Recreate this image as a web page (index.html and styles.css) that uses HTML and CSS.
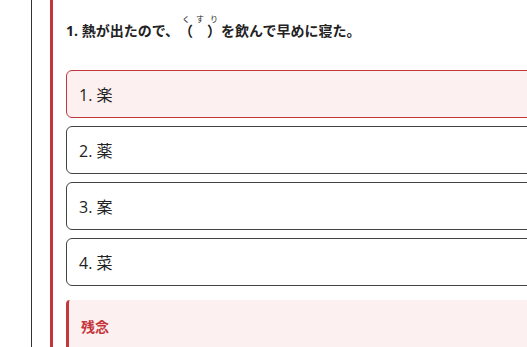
FILE: index.html
```html
<!DOCTYPE html>
<html lang="ja">
<head>
    <meta charset="UTF-8">
    <meta name="viewport" content="width=device-width, initial-scale=1.0">
    <title>漢字クイズ</title>
    <link rel="stylesheet" href="styles.css">
</head>
<body>
    <div class="page">
        <div class="question">
            <p class="question-title">1. 熱が出たので、<ruby>（　）<rt>くすり</rt></ruby>を飲んで早めに寝た。</p>

            <div class="options">
                <div class="option wrong">1. 楽</div>
                <div class="option">2. 薬</div>
                <div class="option">3. 案</div>
                <div class="option">4. 菜</div>
            </div>

            <div class="feedback">
                <span class="feedback-title">残念</span>
            </div>
        </div>
    </div>
</body>
</html>
```

FILE: styles.css
```css
* {
    margin: 0;
    padding: 0;
    box-sizing: border-box;
}

html, body {
    overflow: hidden;
}

body {
    font-family: "Open Sans", "Noto Sans CJK JP", sans-serif;
    background-color: white;
    color: #222;
}

.page {
    margin-left: 31px;
    border-left: 1px solid #333;
    padding-left: 18px;
    min-height: 100vh;
    width: 640px;
}

.question {
    border-left: 3px solid #c4363c;
    padding-left: 13px;
    padding-top: 14px;
    min-height: 100vh;
}

.question-title {
    font-size: 14px;
    font-weight: bold;
    line-height: 28px;
    height: 28px;
    color: #222;
}

.question-title rt {
    font-size: 8px;
    font-weight: normal;
    line-height: 1;
}

.options {
    display: flex;
    flex-direction: column;
    gap: 8px;
    margin-top: 28px;
}

.option {
    height: 48px;
    display: flex;
    align-items: center;
    padding-left: 12px;
    font-size: 16px;
    color: #222;
    border: 1px solid #444;
    border-radius: 6px;
    background-color: white;
}

.option.wrong {
    background-color: #fdf0f0;
    border-color: #c4363c;
}

.feedback {
    margin-top: 14px;
    background-color: #fdf0f0;
    border-left: 3px solid #c4363c;
    border-radius: 4px 0 0 4px;
    padding: 15px 12px;
    height: 60px;
}

.feedback-title {
    font-size: 14px;
    font-weight: bold;
    color: #c4363c;
}
```
